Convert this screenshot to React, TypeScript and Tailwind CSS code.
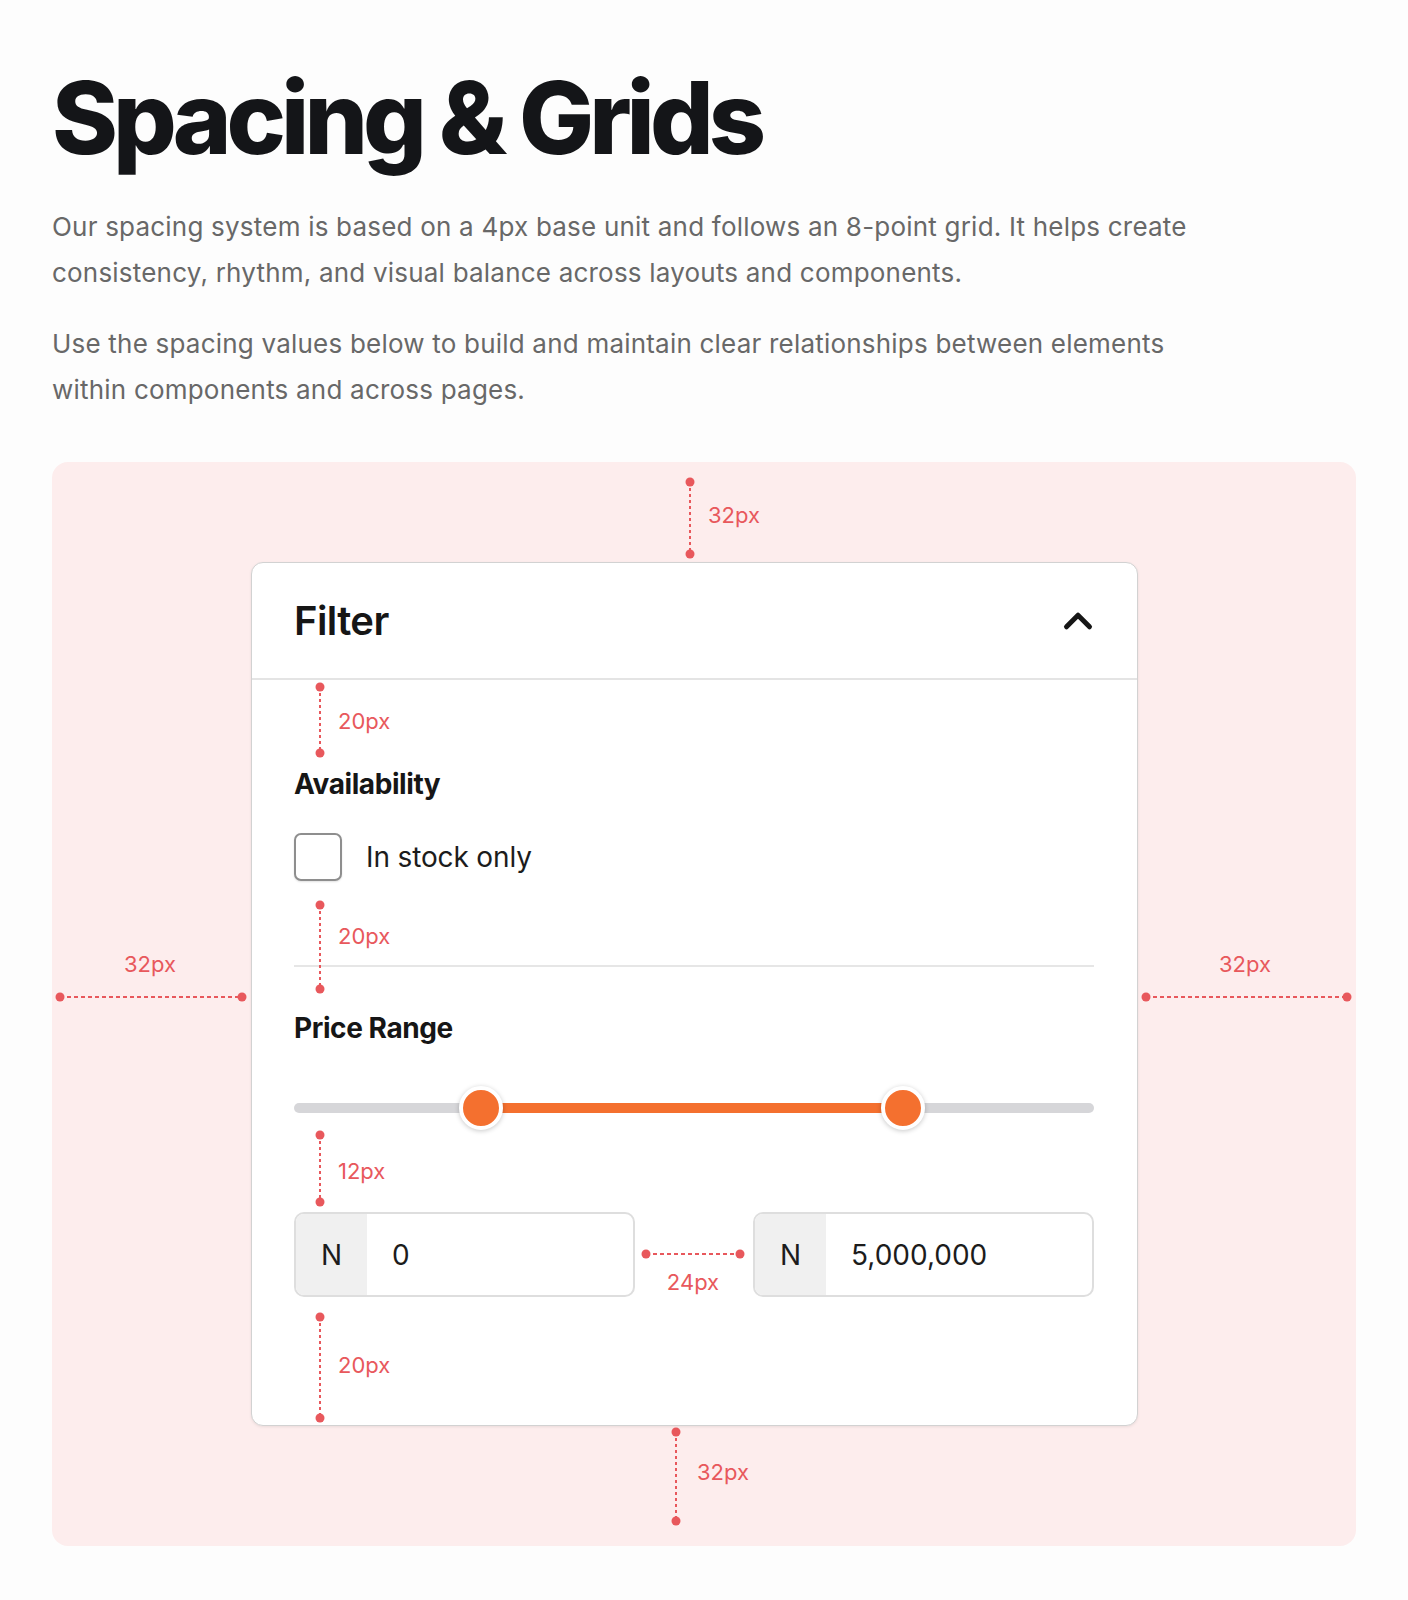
import { ChevronUp } from "lucide-react";

const RED = "#e8585c";

// Vertical spacing marker: two dots joined by a dashed line, with a label beside it
const VMeasure = ({
  x,
  top,
  bottom,
  label,
  labelX,
  labelY,
}: {
  x: number;
  top: number;
  bottom: number;
  label: string;
  labelX: number;
  labelY: number;
}) => {
  const h = bottom - top;
  return (
    <>
      <svg
        className="absolute pointer-events-none"
        style={{ left: x - 6, top: top - 6, width: 12, height: h + 12 }}
        viewBox={`0 0 12 ${h + 12}`}
      >
        <line x1="6" y1="6" x2="6" y2={h + 6} stroke={RED} strokeWidth="2" strokeDasharray="3 3" />
        <circle cx="6" cy="6" r="4.5" fill={RED} />
        <circle cx="6" cy={h + 6} r="4.5" fill={RED} />
      </svg>
      <span
        className="absolute text-[22px] leading-none text-[#e8585c]"
        style={{ left: labelX, top: labelY - 11 }}
      >
        {label}
      </span>
    </>
  );
};

// Horizontal spacing marker with a centred label
const HMeasure = ({
  left,
  right,
  y,
  label,
  labelCx,
  labelY,
}: {
  left: number;
  right: number;
  y: number;
  label: string;
  labelCx: number;
  labelY: number;
}) => {
  const w = right - left;
  return (
    <>
      <svg
        className="absolute pointer-events-none"
        style={{ left: left - 6, top: y - 6, width: w + 12, height: 12 }}
        viewBox={`0 0 ${w + 12} 12`}
      >
        <line x1="6" y1="6" x2={w + 6} y2="6" stroke={RED} strokeWidth="2" strokeDasharray="4 3" />
        <circle cx="6" cy="6" r="4.5" fill={RED} />
        <circle cx={w + 6} cy="6" r="4.5" fill={RED} />
      </svg>
      <span
        className="absolute text-[22px] leading-none text-[#e8585c] -translate-x-1/2"
        style={{ left: labelCx, top: labelY - 11 }}
      >
        {label}
      </span>
    </>
  );
};

const PriceInput = ({ value }: { value: string }) => (
  <div className="flex h-[85px] w-[341px] overflow-hidden rounded-[10px] border-2 border-[#dedede] bg-white">
    <div className="flex w-[71px] items-center justify-center bg-[#f0f0f0] text-[28px] text-[#1c1c1c]">N</div>
    <div className="flex items-center pl-[25px] text-[28px] text-[#1c1c1c]">{value}</div>
  </div>
);

const FilterCard = () => (
  <div className="relative w-[887px] rounded-[12px] border border-[#d2d2d2] bg-white shadow-[0_1px_3px_rgba(0,0,0,0.08)]">
    {/* Header */}
    <div className="flex h-[117px] items-center justify-between border-b-2 border-[#e4e4e4] pl-[42px] pr-[43px]">
      <h2 className="text-[40px] font-semibold tracking-[-0.015em] text-[#161616]">Filter</h2>
      <ChevronUp size={46} strokeWidth={2.6} className="mr-[-7px] text-[#161616]" />
    </div>

    {/* Body */}
    <div className="pl-[42px] pr-[43px] pt-[87px] pb-[128px]">
      <h3 className="text-[28px] font-bold leading-[34px] tracking-[-0.015em] text-[#161616]">Availability</h3>
      <label className="mt-[32px] flex items-center gap-[24px]">
        <span className="h-[48px] w-[48px] rounded-[7px] border-2 border-[#8e8e8e] bg-white shadow-[0_1px_2px_rgba(0,0,0,0.12)]" />
        <span className="text-[28px] tracking-[-0.005em] text-[#1c1c1c]">In stock only</span>
      </label>

      <div className="mt-[84px] h-[2px] bg-[#e6e6e6]" />

      <h3 className="mt-[44px] text-[28px] font-bold leading-[34px] tracking-[-0.015em] text-[#161616]">Price Range</h3>

      {/* Range slider */}
      <div className="relative mt-[41px] flex h-[44px] items-center">
        <div className="h-[10px] w-full rounded-full bg-[#d6d6d9]" />
        <div className="absolute left-[187px] h-[10px] w-[422px] bg-[#f4702f]" />
        <span className="absolute left-[165px] top-0 h-[44px] w-[44px] rounded-full border-4 border-white bg-[#f4702f] shadow-[0_1px_5px_rgba(0,0,0,0.22)]" />
        <span className="absolute left-[587px] top-0 h-[44px] w-[44px] rounded-full border-4 border-white bg-[#f4702f] shadow-[0_1px_5px_rgba(0,0,0,0.22)]" />
      </div>

      <div className="mt-[82px] flex justify-between">
        <PriceInput value="0" />
        <PriceInput value="5,000,000" />
      </div>
    </div>

    {/* Spacing markers inside the card */}
    <VMeasure x={68} top={124} bottom={190} label="20px" labelX={86} labelY={158} />
    <VMeasure x={68} top={342} bottom={426} label="20px" labelX={86} labelY={373} />
    <VMeasure x={68} top={572} bottom={639} label="12px" labelX={86} labelY={608} />
    <HMeasure left={394} right={488} y={691} label="24px" labelCx={441} labelY={719} />
    <VMeasure x={68} top={754} bottom={855} label="20px" labelX={86} labelY={802} />
  </div>
);

export default function App() {
  return (
    <div
      className="min-h-[1600px] bg-[#fdfdfd] px-[52px] pt-[68px] pb-[54px]"
      style={{ fontFamily: "Inter, 'Noto Sans', sans-serif" }}
    >
      <h1 className="text-[100px] font-extrabold leading-none tracking-[-0.05em] text-[#141518]">Spacing &amp; Grids</h1>

      <div className="mt-[36px] max-w-[1180px] text-[26px] leading-[46px] tracking-[0.008em] text-[#686868]">
        <p>
          Our spacing system is based on a 4px base unit and follows an 8-point grid. It helps create consistency,
          rhythm, and visual balance across layouts and components.
        </p>
        <p className="mt-[25px]">
          Use the spacing values below to build and maintain clear relationships between elements within components
          and across pages.
        </p>
      </div>

      {/* Spacing demo panel */}
      <div className="relative mt-[49px] rounded-[16px] bg-[#fdeded] pl-[199px] pt-[100px] pb-[120px]">
        <FilterCard />

        <VMeasure x={638} top={20} bottom={92} label="32px" labelX={656} labelY={53} />
        <VMeasure x={624} top={970} bottom={1059} label="32px" labelX={645} labelY={1010} />
        <HMeasure left={8} right={190} y={535} label="32px" labelCx={98} labelY={502} />
        <HMeasure left={1094} right={1295} y={535} label="32px" labelCx={1193} labelY={502} />
      </div>
    </div>
  );
}
